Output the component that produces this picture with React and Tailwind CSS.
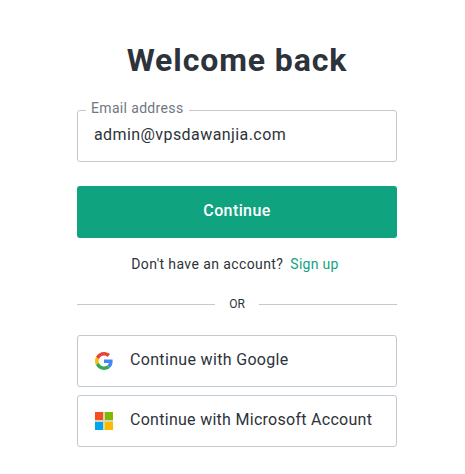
import React, { useState } from 'react';

const GoogleLogo = () => (
  <svg viewBox="0 0 48 48" className="h-[18px] w-[18px]">
    <path fill="#EA4335" d="M24 9.5c3.54 0 6.71 1.22 9.21 3.6l6.85-6.85C35.9 2.38 30.47 0 24 0 14.62 0 6.51 5.38 2.56 13.22l7.98 6.19C12.43 13.72 17.74 9.5 24 9.5z" />
    <path fill="#4285F4" d="M46.98 24.55c0-1.57-.15-3.09-.38-4.55H24v9.02h12.94c-.58 2.96-2.26 5.48-4.78 7.18l7.73 6c4.51-4.18 7.09-10.36 7.09-17.65z" />
    <path fill="#FBBC05" d="M10.53 28.59c-.48-1.45-.76-2.99-.76-4.59s.27-3.14.76-4.59l-7.98-6.19C.92 16.46 0 20.12 0 24c0 3.88.92 7.54 2.56 10.78l7.97-6.19z" />
    <path fill="#34A853" d="M24 48c6.48 0 11.93-2.13 15.89-5.81l-7.73-6c-2.15 1.45-4.92 2.3-8.16 2.3-6.26 0-11.57-4.22-13.47-9.91l-7.98 6.19C6.51 42.62 14.62 48 24 48z" />
  </svg>
);

const MicrosoftLogo = () => (
  <svg viewBox="0 0 18 18" shapeRendering="crispEdges" className="h-[18px] w-[18px]">
    <path fill="#d6d5b4" d="M8 0h2v18H8zM0 8h18v2H0z" />
    <path fill="#f25022" d="M0 0h8v8H0z" />
    <path fill="#7fba00" d="M10 0h8v8h-8z" />
    <path fill="#00a4ef" d="M0 10h8v8H0z" />
    <path fill="#ffb900" d="M10 10h8v8h-8z" />
  </svg>
);

const providers = [
  { name: 'Google', label: 'Continue with Google', Logo: GoogleLogo, spacing: 'tracking-[0.33px]' },
  { name: 'Microsoft', label: 'Continue with Microsoft Account', Logo: MicrosoftLogo, spacing: 'tracking-[0.28px]' },
];

export default function App() {
  const [email, setEmail] = useState('admin@vpsdawanjia.com');

  return (
    <div className="min-h-screen bg-white font-['Roboto',sans-serif] text-[#2d333a]">
      <main className="ml-[77px] w-80 pt-10">
        <h1 className="h-10 whitespace-nowrap text-center text-[32px] leading-10 font-bold tracking-[0.9px]">
          Welcome back
        </h1>

        {/* Email field */}
        <div className="relative mt-[30px] h-[52px] rounded-[3px] border border-[#c2c8d0]">
          <label htmlFor="email" className="absolute -top-[13px] left-2 bg-white pr-1.5 pl-[5px] text-sm leading-5 tracking-[0.34px] whitespace-nowrap text-[#6f7780]">
            Email address
          </label>
          <input
            id="email"
            type="text"
            value={email}
            onChange={(e) => setEmail(e.target.value)}
            className="h-[46px] w-full bg-transparent px-4 text-base tracking-[0.42px] outline-none"
          />
        </div>

        <button className="mt-6 flex h-[52px] w-full items-center justify-center rounded-[3px] bg-[#10a37f] pb-0.5 text-base font-medium tracking-[0.4px] text-white">
          Continue
        </button>

        <p className="mt-4 -ml-1 flex justify-center gap-[7px] text-sm leading-5 whitespace-nowrap">
          <span className="tracking-[0.4px]">Don't have an account?</span>
          <a href="#" className="tracking-[0.3px] text-[#10a37f]">Sign up</a>
        </p>

        {/* Divider */}
        <div className="mt-[22px] flex h-4 items-center">
          <div className="h-px w-[138px] bg-[#c2c8d0]"></div>
          <span className="flex-1 text-center text-xs">OR</span>
          <div className="h-px w-[138px] bg-[#c2c8d0]"></div>
        </div>

        <div className="mt-[23px] space-y-2">
          {providers.map(({ name, label, Logo, spacing }) => (
            <button key={name} className="flex h-[52px] w-full items-center gap-[17px] rounded-[3px] border border-[#c2c8d0] px-[17px] text-left">
              <Logo />
              <span className={`pb-0.5 text-base whitespace-nowrap ${spacing}`}>{label}</span>
            </button>
          ))}
        </div>
      </main>
    </div>
  );
}
